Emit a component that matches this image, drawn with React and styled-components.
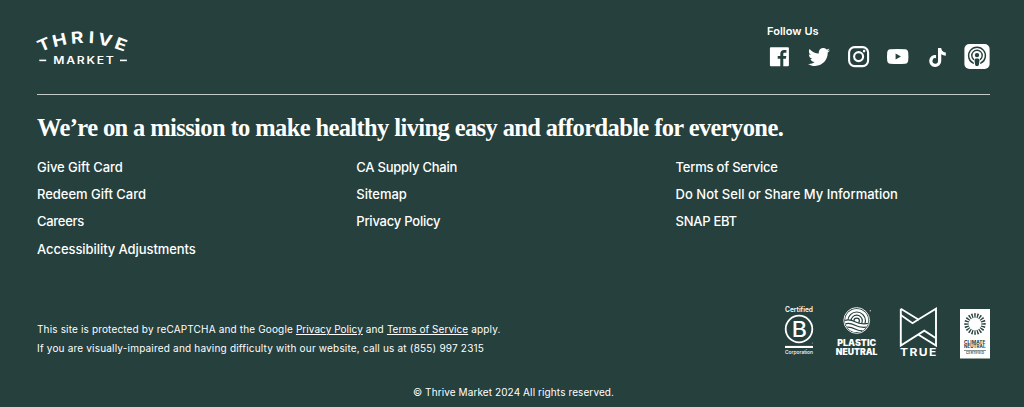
import React from "react";
import styled, { createGlobalStyle } from "styled-components";
import { FaTwitter, FaTiktok } from "react-icons/fa";

const GREEN = "#25403d";

const GlobalStyle = createGlobalStyle`
  body {
    margin: 0;
    background: ${GREEN};
  }
`;

const FooterWrapper = styled("footer")`
  box-sizing: border-box;
  height: 407px;
  padding: 0 34px 0 37px;
  display: flex;
  flex-direction: column;
  overflow: hidden;
  background: ${GREEN};
  color: #fff;
  font-family: Inter, "Work Sans", sans-serif;
`;

const TopRow = styled("div")`
  box-sizing: border-box;
  height: 95px;
  padding-top: 24px;
  display: flex;
  justify-content: space-between;
  border-bottom: 1px solid #c3cbc9;
`;

const Logo = styled("svg")`
  display: block;
  width: 92px;
  height: 36px;
  margin-top: 6px;
  overflow: visible;
  fill: #fff;
  font-family: Inter, sans-serif;
`;

const Social = styled("div")`
  width: 223px;
`;

const SocialTitle = styled("div")`
  height: 14px;
  line-height: 14px;
  font-size: 11px;
  font-weight: 600;
  letter-spacing: 0.04px;
`;

const SocialIcons = styled("div")`
  margin-top: 6px;
  display: flex;
  justify-content: space-between;
`;

const SocialLink = styled("a")`
  width: 26px;
  height: 26px;
  display: flex;
  align-items: center;
  justify-content: center;
  color: #fff;
  svg {
    display: block;
  }
`;

const Mission = styled("h2")`
  margin: 16px 0 0;
  height: 33px;
  line-height: 33px;
  font-family: "Liberation Serif", serif;
  font-size: 24.5px;
  font-weight: 700;
  letter-spacing: -0.61px;
  white-space: nowrap;
`;

const Links = styled("nav")`
  margin-top: 10px;
  display: grid;
  grid-template-columns: 319.3px 319.3px 1fr;
`;

const LinkColumn = styled("div")`
  display: flex;
  flex-direction: column;
  align-items: flex-start;
`;

const FooterLink = styled("a")`
  height: 27.2px;
  line-height: 27px;
  font-size: 13px;
  font-weight: 500;
  letter-spacing: ${({ $spacing }) => $spacing || 0}px;
  color: #fff;
  white-space: nowrap;
`;

const BottomRow = styled("div")`
  margin-top: 43px;
  height: 56px;
  display: flex;
  justify-content: space-between;
`;

const Legal = styled("div")`
  padding-top: 14px;
`;

const LegalLine = styled("p")`
  margin: 0;
  height: 19px;
  line-height: 19px;
  font-size: 10px;
  letter-spacing: ${({ $spacing }) => $spacing || 0}px;
  white-space: nowrap;
  a {
    color: #fff;
    letter-spacing: 0.05px;
    text-decoration: underline;
  }
`;

const Badges = styled("div")`
  display: flex;
  align-items: flex-start;
`;

const Badge = styled("svg")`
  display: block;
  flex: none;
  margin-left: ${({ $gap }) => $gap || 0}px;
  font-family: Inter, sans-serif;
`;

const Copyright = styled("div")`
  margin-top: 22px;
  line-height: 16px;
  font-size: 10px;
  letter-spacing: 0.1px;
  text-align: center;
`;

const columns = [
  [
    { label: "Give Gift Card", spacing: -0.04 },
    { label: "Redeem Gift Card", spacing: -0.02 },
    { label: "Careers", spacing: -0.28 },
    { label: "Accessibility Adjustments", spacing: -0.07 },
  ],
  [
    { label: "CA Supply Chain", spacing: -0.24 },
    { label: "Sitemap", spacing: 0 },
    { label: "Privacy Policy", spacing: -0.23 },
  ],
  [
    { label: "Terms of Service", spacing: -0.22 },
    { label: "Do Not Sell or Share My Information", spacing: 0 },
    { label: "SNAP EBT", spacing: -0.28 },
  ],
];

// centre of each letter on the arc
const arcLetters = [
  { char: "T", x: 6.8, y: 14.4, angle: -23 },
  { char: "H", x: 22.4, y: 9.8, angle: -13 },
  { char: "R", x: 40.2, y: 7.4, angle: -4 },
  { char: "I", x: 54.6, y: 7.2, angle: 3 },
  { char: "V", x: 68.2, y: 9.8, angle: 12 },
  { char: "E", x: 84, y: 14.2, angle: 20 },
];

const ThriveLogo = () => (
  <Logo viewBox="0 0 92 36">
    {arcLetters.map(({ char, x, y, angle }) => (
      <text
        key={char}
        transform={`translate(${x} ${y}) rotate(${angle}) scale(1.18 1)`}
        y="5.9"
        textAnchor="middle"
        fontSize="16.2"
        fontWeight="700"
      >
        {char}
      </text>
    ))}
    <rect x="2.3" y="29.6" width="6.9" height="1.6" />
    <text
      x="16.2"
      y="34"
      fontSize="9.7"
      fontWeight="600"
      letterSpacing="1.4"
      textLength="62.4"
      lengthAdjust="spacingAndGlyphs"
    >
      MARKET
    </text>
    <rect x="83" y="29.6" width="6.9" height="1.6" />
  </Logo>
);

const FacebookIcon = () => (
  <svg width="26" height="26" viewBox="0.4 0.4 26 26">
    <path
      fill="currentColor"
      d="M4.3 3.6h17a1 1 0 0 1 1 1v17a1 1 0 0 1-1 1h-4.6V15.200h2.6l.4-2.900h-3v-1.800c0-.9.3-1.400 1.500-1.400h1.600V6.500c-.3 0-1.200-.1-2.300-.1-2.300 0-3.800 1.400-3.800 3.900v2h-2.600v2.900h2.600v7.400H4.300a1 1 0 0 1-1-1v-17a1 1 0 0 1 1-1z"
    />
  </svg>
);

const InstagramIcon = () => (
  <svg width="26" height="26" viewBox="0.4 0.4 26 26" fill="none" stroke="currentColor">
    <rect x="3.5" y="3.5" width="19" height="19" rx="5.5" strokeWidth="2.1" />
    <circle cx="13" cy="13" r="4.5" strokeWidth="2.1" />
    <circle cx="18.5" cy="7.5" r="1.3" fill="currentColor" stroke="none" />
  </svg>
);

const YoutubeIcon = () => (
  <svg width="26" height="26" viewBox="0.3 0.5 26 26">
    <path
      fill="currentColor"
      fillRule="evenodd"
      d="M5.5 5.8Q13 5 20.5 5.8Q23.3 6.1 23.5 9Q23.900 13 23.5 17Q23.3 19.9 20.5 20.2Q13 21 5.5 20.2Q2.7 19.9 2.5 17Q2.100 13 2.5 9Q2.7 6.1 5.5 5.8zM10.9 9.9v6.2l5.3-3.1z"
    />
  </svg>
);

const PodcastIcon = () => (
  <svg width="26" height="26" viewBox="0 0.6 26 26">
    <rect x="0.4" y="0.6" width="25.2" height="25" rx="5" fill="#fff" />
    <g fill="none" stroke={GREEN} strokeWidth="1.4" strokeLinecap="round">
      <path d="M9.3 19.8A8.4 8.4 0 1 1 16.7 19.8" />
      <path d="M9.6 16A5.2 5.2 0 1 1 16.4 16" />
    </g>
    <circle cx="13" cy="11.7" r="2.2" fill={GREEN} />
    <path
      fill={GREEN}
      d="M13 15c1.7 0 2.6.6 2.5 1.9l-.6 4.2c-.2 1.1-.8 1.5-1.9 1.5s-1.7-.4-1.9-1.5l-.6-4.2c-.1-1.3.8-1.9 2.5-1.900z"
    />
  </svg>
);

const BCorpBadge = () => (
  <Badge width="30" height="50" viewBox="0 0 30 50" fill="#fff">
    <text x="1" y="6.3" fontSize="7" fontWeight="600" textLength="28" lengthAdjust="spacingAndGlyphs">
      Certified
    </text>
    <circle cx="15" cy="23" r="13.3" fill="none" stroke="#fff" strokeWidth="1.8" />
    <text x="7.8" y="30.5" fontSize="20.8" fontWeight="500" textLength="15.2" lengthAdjust="spacingAndGlyphs">
      B
    </text>
    <circle cx="28.3" cy="37" r="0.5" opacity="0.6" />
    <rect x="1" y="39.9" width="28" height="2.1" />
    <text x="1" y="47.6" fontSize="5.2" fontWeight="500" textLength="28" lengthAdjust="spacingAndGlyphs">
      Corporation
    </text>
  </Badge>
);

const PlasticBadge = () => (
  <Badge $gap={21} width="44" height="50" viewBox="0 0 44 50" fill="#fff">
    <defs>
      <clipPath id="globe">
        <circle cx="21.7" cy="14.5" r="11.6" />
      </clipPath>
    </defs>
    <circle cx="21.7" cy="14.5" r="12.9" fill="none" stroke="#fff" strokeWidth="0.9" />
    <g clipPath="url(#globe)">
      <rect x="8" y="1" width="28" height="28" />
      <g fill="none" stroke={GREEN} strokeWidth="1.2">
        <circle cx="21.7" cy="14.8" r="8.8" />
        <circle cx="21.7" cy="14.8" r="5.6" />
        <circle cx="21.7" cy="14.8" r="2.7" />
      </g>
      <path d="M8 14.5Q14 12.5 20 15.5T36 17V29H8z" />
      <g fill="none" stroke={GREEN} strokeWidth="1.3">
        <path d="M8 15Q14 12.5 20 15.8T36 17" />
        <path d="M8 18.5Q14 16 20 19.3T36 20.5" />
        <path d="M8 22.2Q14 19.7 20 23T36 24" />
      </g>
    </g>
    <circle cx="35.3" cy="4.8" r="0.7" opacity="0.7" />
    <text x="2.3" y="39.9" fontSize="8.6" fontWeight="900" textLength="38.8" lengthAdjust="spacingAndGlyphs">
      PLASTIC
    </text>
    <text x="0.8" y="48.9" fontSize="8.6" fontWeight="900" textLength="41.6" lengthAdjust="spacingAndGlyphs">
      NEUTRAL
    </text>
  </Badge>
);

const TrueBadge = () => (
  <Badge $gap={20} width="39" height="52" viewBox="0 0 39 52" fill="#fff">
    <g fill="none" stroke="#fff" strokeWidth="1.9">
      <path d="M1.8 2.8L19.3 13.5L37 2.8V39.6L19.5 28.7M1.8 2.8V39.6L25.3 24.6L37 32.2" />
      <path d="M1.8 9L13.5 17.2L19.3 13.5" />
    </g>
    <text x="1" y="50.2" fontSize="10.6" fontWeight="700" letterSpacing="1.2" textLength="37.6" lengthAdjust="spacingAndGlyphs">
      TRUE
    </text>
  </Badge>
);

const ClimateBadge = () => (
  <Badge $gap={22} width="30" height="53" viewBox="0 0 30 53" fill={GREEN}>
    <rect x="0" y="3" width="30" height="49.5" fill="#fff" />
    {Array.from({ length: 20 }, (_, i) => (
      <path
        key={i}
        d="M14.1 7.3h1.7l-.3 4.5h-1z"
        transform={`rotate(${i * 18} 15 18)`}
      />
    ))}
    <text x="4" y="37.6" fontSize="4.7" fontWeight="700" textLength="21.5" lengthAdjust="spacingAndGlyphs">
      CLIMATE
    </text>
    <text x="4" y="42.2" fontSize="4.7" fontWeight="700" textLength="21.5" lengthAdjust="spacingAndGlyphs">
      NEUTRAL
    </text>
    <rect x="4" y="44.1" width="22" height="0.7" opacity="0.8" />
    <text x="6" y="48.4" fontSize="2.9" fontWeight="600" textLength="18" lengthAdjust="spacingAndGlyphs">
      CERTIFIED
    </text>
  </Badge>
);

const App = () => {
  return (
    <>
      <GlobalStyle />
      <FooterWrapper>
        <TopRow>
          <ThriveLogo />
          <Social>
            <SocialTitle>Follow Us</SocialTitle>
            <SocialIcons>
              <SocialLink aria-label="Facebook">
                <FacebookIcon />
              </SocialLink>
              <SocialLink aria-label="Twitter">
                <FaTwitter size={22} />
              </SocialLink>
              <SocialLink aria-label="Instagram">
                <InstagramIcon />
              </SocialLink>
              <SocialLink aria-label="YouTube">
                <YoutubeIcon />
              </SocialLink>
              <SocialLink aria-label="TikTok">
                <FaTiktok size={19} />
              </SocialLink>
              <SocialLink aria-label="Podcast">
                <PodcastIcon />
              </SocialLink>
            </SocialIcons>
          </Social>
        </TopRow>
        <Mission>
          We’re on a mission to make healthy living easy and affordable for everyone.
        </Mission>
        <Links>
          {columns.map((links, i) => (
            <LinkColumn key={i}>
              {links.map(({ label, spacing }) => (
                <FooterLink key={label} $spacing={spacing}>
                  {label}
                </FooterLink>
              ))}
            </LinkColumn>
          ))}
        </Links>
        <BottomRow>
          <Legal>
            <LegalLine $spacing={0.155}>
              This site is protected by reCAPTCHA and the Google <a>Privacy Policy</a> and{" "}
              <a>Terms of Service</a> apply.
            </LegalLine>
            <LegalLine $spacing={0.19}>
              If you are visually-impaired and having difficulty with our website, call us at (855)
              997 2315
            </LegalLine>
          </Legal>
          <Badges>
            <BCorpBadge />
            <PlasticBadge />
            <TrueBadge />
            <ClimateBadge />
          </Badges>
        </BottomRow>
        <Copyright>© Thrive Market 2024 All rights reserved.</Copyright>
      </FooterWrapper>
    </>
  );
};

export default App;
